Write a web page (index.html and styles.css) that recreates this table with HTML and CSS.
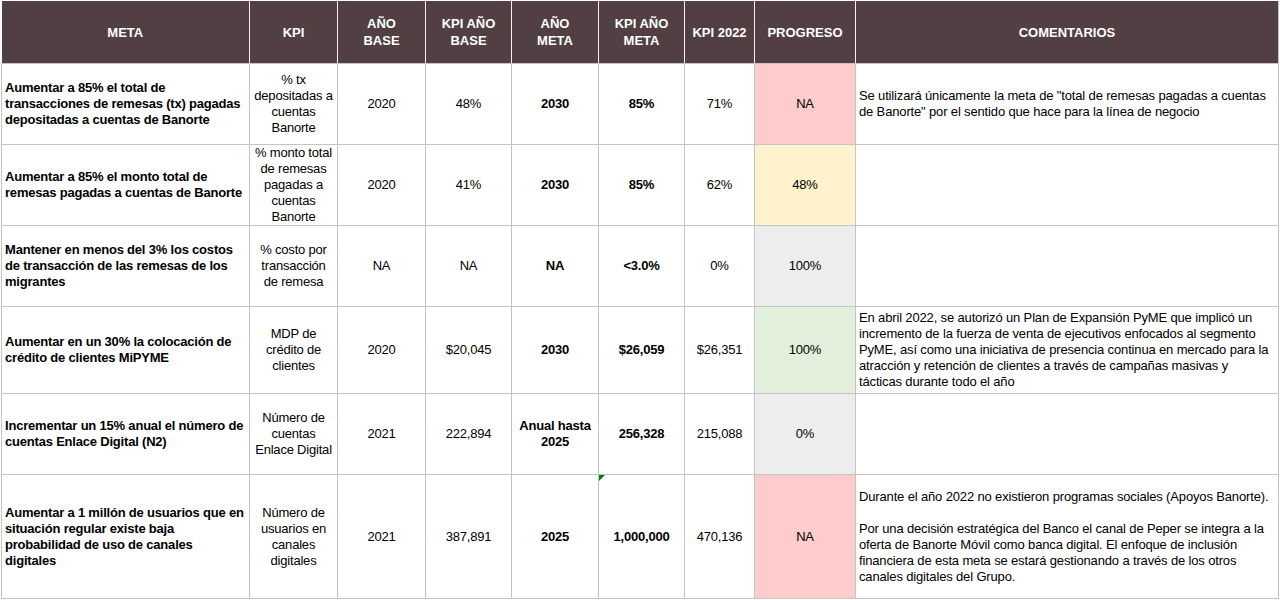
FILE: index.html
```html
<!DOCTYPE html>
<html lang="es">
<head>
<meta charset="utf-8">
<title>Metas KPI</title>
<link rel="stylesheet" href="styles.css">
</head>
<body>
<table class="grid">
  <colgroup>
    <col class="c-meta">
    <col class="c-kpi">
    <col class="c-abase">
    <col class="c-kbase">
    <col class="c-ameta">
    <col class="c-kmeta">
    <col class="c-k22">
    <col class="c-prog">
    <col class="c-com">
  </colgroup>
  <thead>
    <tr class="head">
      <th>META</th>
      <th>KPI</th>
      <th>AÑO<br>BASE</th>
      <th>KPI AÑO<br>BASE</th>
      <th>AÑO<br>META</th>
      <th>KPI AÑO<br>META</th>
      <th>KPI 2022</th>
      <th>PROGRESO</th>
      <th>COMENTARIOS</th>
    </tr>
  </thead>
  <tbody>
    <tr class="r81">
      <td class="meta">Aumentar a 85% el total de transacciones de remesas (tx) pagadas depositadas a cuentas de Banorte</td>
      <td class="num">% tx<br>depositadas a<br>cuentas<br>Banorte</td>
      <td class="num">2020</td>
      <td class="num">48%</td>
      <td class="num b">2030</td>
      <td class="num b">85%</td>
      <td class="num">71%</td>
      <td class="num p-red">NA</td>
      <td class="com">Se utilizará únicamente la meta de "total de remesas pagadas a cuentas de Banorte" por el sentido que hace para la línea de negocio</td>
    </tr>
    <tr class="r81">
      <td class="meta">Aumentar a 85% el monto total de remesas pagadas a cuentas de Banorte</td>
      <td class="num">% monto total<br>de remesas<br>pagadas a<br>cuentas<br>Banorte</td>
      <td class="num">2020</td>
      <td class="num">41%</td>
      <td class="num b">2030</td>
      <td class="num b">85%</td>
      <td class="num">62%</td>
      <td class="num p-yellow">48%</td>
      <td class="com"></td>
    </tr>
    <tr class="r81">
      <td class="meta">Mantener en menos del 3% los costos de transacción de las remesas de los migrantes</td>
      <td class="num">% costo por<br>transacción<br>de remesa</td>
      <td class="num">NA</td>
      <td class="num">NA</td>
      <td class="num b">NA</td>
      <td class="num b">&lt;3.0%</td>
      <td class="num">0%</td>
      <td class="num p-gray">100%</td>
      <td class="com"></td>
    </tr>
    <tr class="r87">
      <td class="meta">Aumentar en un 30% la colocación de crédito de clientes MiPYME</td>
      <td class="num">MDP de<br>crédito de<br>clientes</td>
      <td class="num">2020</td>
      <td class="num">$20,045</td>
      <td class="num b">2030</td>
      <td class="num b">$26,059</td>
      <td class="num">$26,351</td>
      <td class="num p-green">100%</td>
      <td class="com">En abril 2022, se autorizó un Plan de Expansión PyME que implicó un incremento de la fuerza de venta de ejecutivos enfocados al segmento PyME, así como una iniciativa de presencia continua en mercado para la atracción y retención de clientes a través de campañas masivas y tácticas durante todo el año</td>
    </tr>
    <tr class="r81">
      <td class="meta">Incrementar un 15% anual el número de cuentas Enlace Digital (N2)</td>
      <td class="num">Número de<br>cuentas<br>Enlace Digital</td>
      <td class="num">2021</td>
      <td class="num">222,894</td>
      <td class="num b">Anual hasta<br>2025</td>
      <td class="num b">256,328</td>
      <td class="num">215,088</td>
      <td class="num p-gray">0%</td>
      <td class="com"></td>
    </tr>
    <tr class="r124">
      <td class="meta">Aumentar a 1 millón de usuarios que en situación regular existe baja probabilidad de uso de canales digitales</td>
      <td class="num">Número de<br>usuarios en<br>canales<br>digitales</td>
      <td class="num">2021</td>
      <td class="num">387,891</td>
      <td class="num b">2025</td>
      <td class="num b flag">1,000,000</td>
      <td class="num">470,136</td>
      <td class="num p-red">NA</td>
      <td class="com">Durante el año 2022 no existieron programas sociales (Apoyos Banorte).<br><br>Por una decisión estratégica del Banco el canal de Peper se integra a la oferta de Banorte Móvil como banca digital. El enfoque de inclusión financiera de esta meta se estará gestionando a través de los otros canales digitales del Grupo.</td>
    </tr>
  </tbody>
</table>
</body>
</html>
```
FILE: styles.css
```css
html, body {
  margin: 0;
  padding: 0;
  background: #ffffff;
}

body {
  padding: 1px 0 0 1px;
  font-family: "Liberation Sans", Arial, sans-serif;
  font-size: 13px;
  line-height: 16px;
  letter-spacing: -0.2px;
  color: #000000;
}

.grid {
  border-collapse: collapse;
  table-layout: fixed;
  width: 1277px;
}

.c-meta { width: 248px; }
.c-kpi { width: 88px; }
.c-abase { width: 88px; }
.c-kbase { width: 86px; }
.c-ameta { width: 87px; }
.c-kmeta { width: 86px; }
.c-k22 { width: 70px; }
.c-prog { width: 101px; }
.c-com { width: 423px; }

.head th {
  height: 62px;
  background: #523f44;
  color: #ffffff;
  font-weight: bold;
  font-size: 13px;
  line-height: 17px;
  letter-spacing: 0;
  text-align: center;
  vertical-align: middle;
  padding: 0 2px;
  border-left: 1px solid #f2f2f2;
  border-right: 1px solid #f2f2f2;
  border-bottom: 1px solid #c4c4c4;
}

.head th:first-child { border-left: none; }
.head th:last-child { border-right: 1px solid #c4c4c4; }

td {
  border: 1px solid #c4c4c4;
  vertical-align: middle;
  padding: 0 2px;
  overflow: hidden;
}

.r81 td { height: 80px; }
.r87 td { height: 86px; }
.r124 td { height: 123px; }

.meta {
  font-weight: bold;
  text-align: left;
  padding-left: 3px;
  padding-right: 5px;
  letter-spacing: -0.2px;
}

.num {
  text-align: center;
}

.b { font-weight: bold; }

.com {
  text-align: left;
  padding-left: 3px;
  padding-right: 8px;
  letter-spacing: -0.15px;
}

.p-red { background: #ffcccc; }
.p-yellow { background: #fff2cc; }
.p-gray { background: #ededed; }
.p-green { background: #e2efda; }

.flag {
  position: relative;
}

.flag::before {
  content: "";
  position: absolute;
  left: 0;
  top: 0;
  width: 0;
  height: 0;
  border-top: 6px solid #0b7d0b;
  border-right: 6px solid transparent;
}
```
